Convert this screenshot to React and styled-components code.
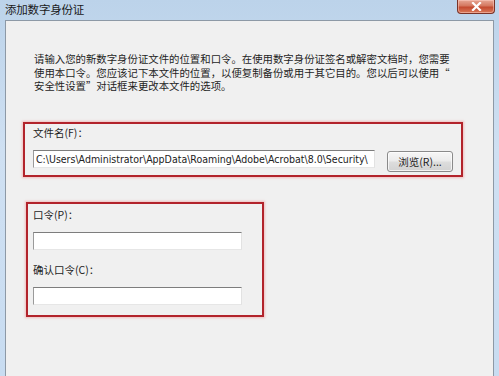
import React from "react";
import styled, { createGlobalStyle } from "styled-components";

const GlobalStyle = createGlobalStyle`
  html, body {
    margin: 0;
    padding: 0;
    background: #c9dcf0;
  }
  #root {
    width: 499px;
    height: 376px;
    overflow: hidden;
  }
`;

const cjk = `"Noto Sans CJK SC", "Liberation Sans", sans-serif`;

const Window = styled.div`
  width: 499px;
  height: 376px;
  display: flex;
  flex-direction: column;
  background: linear-gradient(180deg, #bcd3ea 0%, #cfe0f2 40%, #c8dcf1 100%);
`;

const TitleBar = styled.div`
  height: 20px;
  display: flex;
  align-items: flex-start;
  padding-left: 5px;
`;

const Title = styled.span`
  font-family: ${cjk};
  font-size: 11.5px;
  line-height: 19px;
  color: #1a1a1a;
  letter-spacing: -0.2px;
`;

const CloseButton = styled.div`
  margin-left: auto;
  margin-right: 4px;
  width: 36px;
  height: 13px;
  border: 1px solid #7a3328;
  border-top: none;
  border-radius: 0 0 4px 4px;
  background: linear-gradient(180deg, #e7a795 0%, #d4775f 45%, #c44a30 55%, #d97a5a 100%);
  display: flex;
  align-items: center;
  justify-content: center;
  box-shadow: inset 0 0 0 1px rgba(255, 210, 200, 0.5);
`;

const Panel = styled.div`
  flex: 1;
  margin: 0 5px 0 5px;
  border: 1px solid #8d99a6;
  border-bottom: none;
  background: #f0f0f0;
  padding: 31px 0 0 17px;
  display: flex;
  flex-direction: column;
  align-items: flex-start;
`;

const Intro = styled.p`
  margin: 0 0 29px 11px;
  font-family: ${cjk};
  font-size: 10.4px;
  line-height: 13.5px;
  color: #1e1e1e;
  white-space: nowrap;
`;

const Group = styled.div`
  margin-left: ${(p) => p.$offset || 0}px;
  width: ${(p) => p.$width}px;
  border: 2px solid #b2232b;
  box-shadow: 0 0 2px 1px rgba(240, 150, 150, 0.55);
  padding: ${(p) => p.$pad};
  margin-bottom: ${(p) => p.$gap || 0}px;
  box-sizing: border-box;
  display: flex;
  flex-direction: column;
  align-items: flex-start;
`;

const Label = styled.div`
  font-family: ${cjk};
  font-size: 10.5px;
  line-height: 14px;
  color: #1e1e1e;
  margin-bottom: 10px;
  margin-top: ${(p) => p.$top || 0}px;
`;

const Row = styled.div`
  display: flex;
  align-items: flex-start;
  gap: 12px;
`;

const Field = styled.input`
  width: ${(p) => p.$width}px;
  height: 18px;
  box-sizing: border-box;
  margin: 0;
  padding: 0 0 0 2px;
  border: 1px solid;
  border-color: #7d7d7d #e2e2e2 #e6e6e6 #9a9a9a;
  background: #fff;
  font-family: "DejaVu Sans Condensed", "Liberation Sans", sans-serif;
  font-size: 10.5px;
  color: #222;
  outline: none;
`;

const Button = styled.div`
  margin-top: 1px;
  width: 66px;
  height: 21px;
  box-sizing: border-box;
  border: 1px solid #8a8a8a;
  border-radius: 3px;
  background: linear-gradient(180deg, #f6f6f6 0%, #ebebeb 48%, #dddddd 52%, #d2d2d2 100%);
  box-shadow: inset 0 0 0 1px rgba(255, 255, 255, 0.7);
  display: flex;
  align-items: center;
  justify-content: center;
  font-family: ${cjk};
  font-size: 10.5px;
  color: #1e1e1e;
`;

const App = () => {
  return (
    <>
      <GlobalStyle />
      <Window>
        <TitleBar>
          <Title>添加数字身份证</Title>
          <CloseButton>
            <svg width="11" height="9" viewBox="0 0 11 9">
              <path d="M2 1 L9 8 M9 1 L2 8" stroke="#fff" strokeWidth="2.2" strokeLinecap="square" />
            </svg>
          </CloseButton>
        </TitleBar>
        <Panel>
          <Intro>
            请输入您的新数字身份证文件的位置和口令。在使用数字身份证签名或解密文档时，您需要
            <br />
            使用本口令。您应该记下本文件的位置，以便复制备份或用于其它目的。您以后可以使用“
            <br />
            安全性设置”对话框来更改本文件的选项。
          </Intro>
          <Group $width={440} $pad="2px 7px 3px 8px" $gap={25}>
            <Label>文件名(F)：</Label>
            <Row>
              <Field
                $width={342}
                readOnly
                defaultValue={"C:\\Users\\Administrator\\AppData\\Roaming\\Adobe\\Acrobat\\8.0\\Security\\"}
              />
              <Button>浏览(R)...</Button>
            </Row>
          </Group>
          <Group $offset={3} $width={238} $pad="4px 5px 10px 5px">
            <Label>口令(P)：</Label>
            <Field $width={209} readOnly />
            <Label $top={13}>确认口令(C)：</Label>
            <Field $width={209} readOnly />
          </Group>
        </Panel>
      </Window>
    </>
  );
};

export default App;
